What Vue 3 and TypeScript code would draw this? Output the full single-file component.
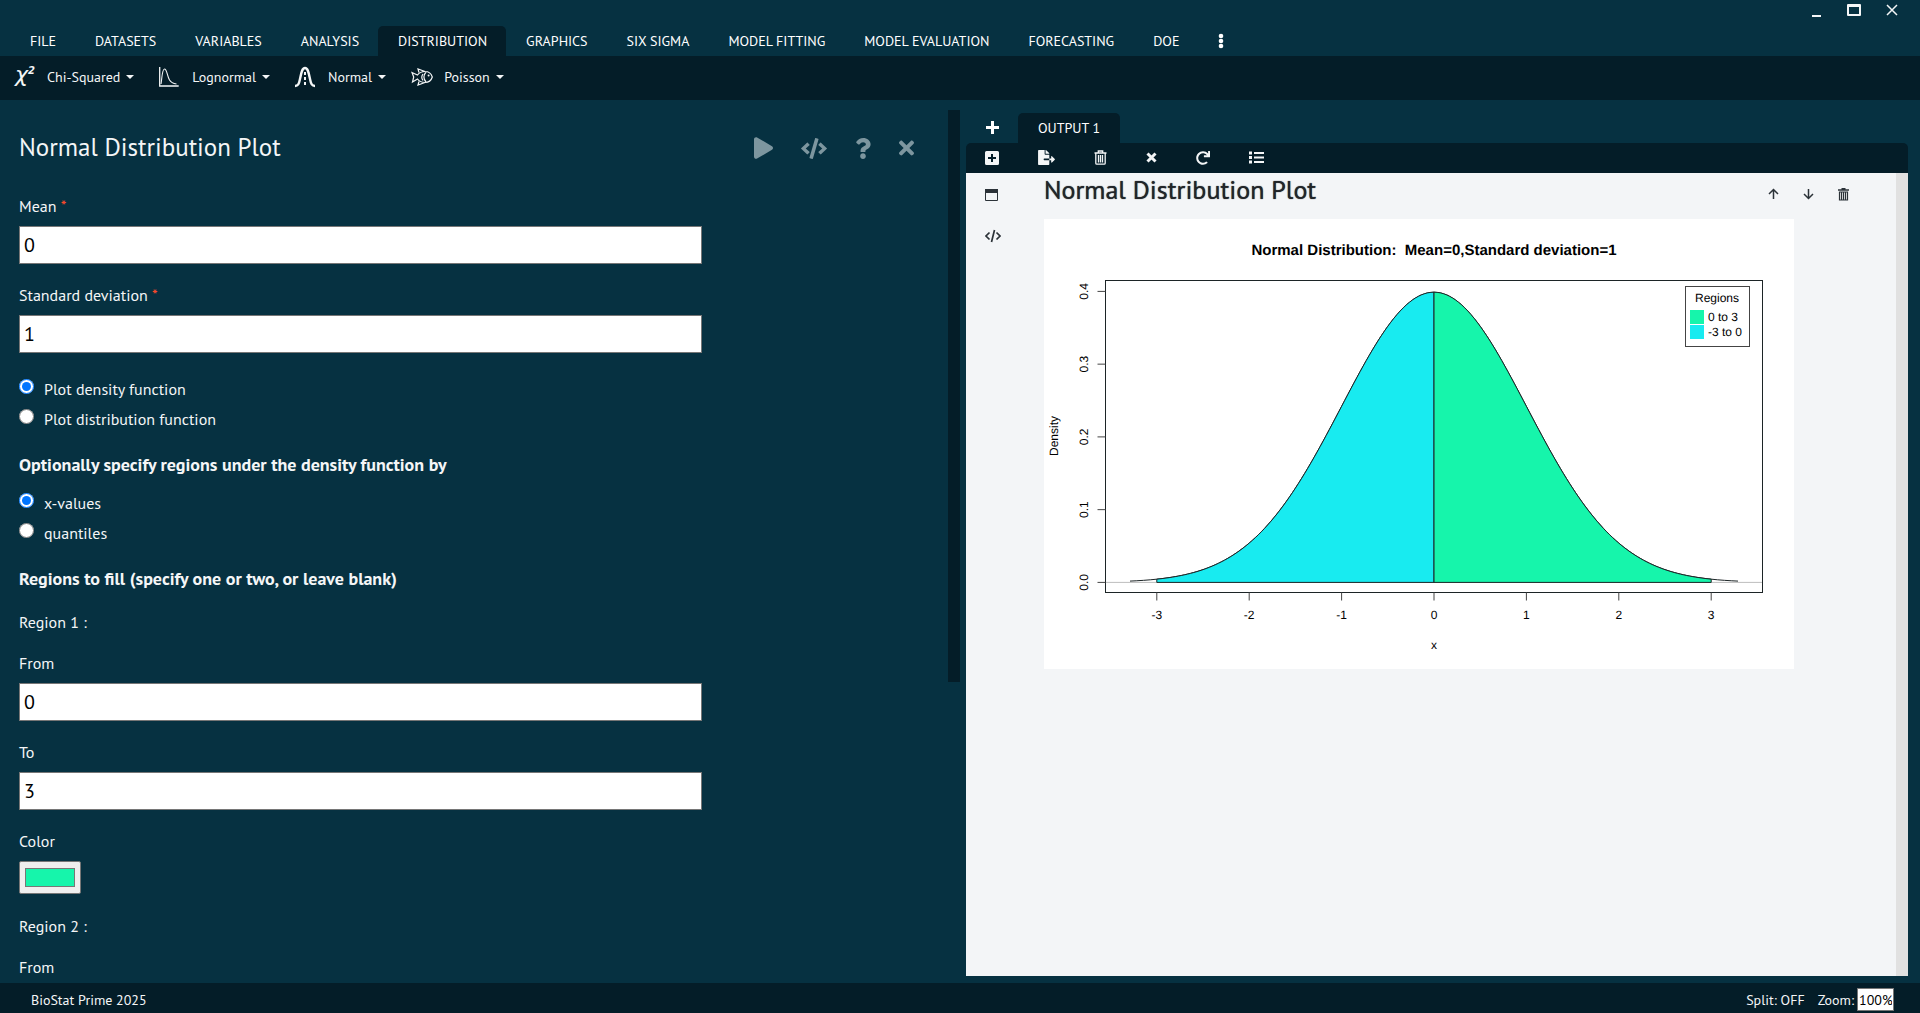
<script setup lang="ts">
import { ref } from 'vue'

const tabs = [
  'FILE', 'DATASETS', 'VARIABLES', 'ANALYSIS', 'DISTRIBUTION', 'GRAPHICS', 'SIX SIGMA',
  'MODEL FITTING', 'MODEL EVALUATION', 'FORECASTING', 'DOE',
]
const activeTab = ref('DISTRIBUTION')

const mean = ref('0')
const sd = ref('1')
const plotKind = ref('density')
const regionKind = ref('x')
const from1 = ref('0')
const to1 = ref('3')
const color1 = ref('#16f5ab')
const color2 = '#18ebf0'
const from2 = ref('-3')
const zoomLevel = ref('100%')

// Chart geometry, in viewBox units.
const x0 = 390
const xUnit = 92.4
const y0 = 363.4
const yUnit = 727.5
const box = { left: 61.5, top: 61.5, right: 718.5, bottom: 373.5 }

const px = (x: number) => x0 + x * xUnit
const py = (y: number) => y0 - y * yUnit
const density = (x: number) => Math.exp((-x * x) / 2) / Math.sqrt(2 * Math.PI)

function curve(a: number, b: number): string {
  const steps = 90
  const pts: string[] = []
  for (let i = 0; i <= steps; i++) {
    const x = a + ((b - a) * i) / steps
    pts.push(`${px(x).toFixed(2)},${py(density(x)).toFixed(2)}`)
  }
  return pts.join(' ')
}
const area = (a: number, b: number) => `${px(a)},${y0} ${curve(a, b)} ${px(b)},${y0}`

const xTicks = [-3, -2, -1, 0, 1, 2, 3]
const yTicks = [0, 0.1, 0.2, 0.3, 0.4]
</script>

<template>
  <div class="app">
    <header class="titlebar">
      <nav class="tabs">
        <button
          v-for="t in tabs"
          :key="t"
          class="tab"
          :class="{ active: t === activeTab }"
          @click="activeTab = t"
        >{{ t }}</button>
        <button class="tab more" aria-label="More">
          <svg width="6" height="16" viewBox="0 0 6 16"><circle cx="3" cy="3" r="2.300" /><circle cx="3" cy="8" r="2.300" /><circle cx="3" cy="13" r="2.300" /></svg>
        </button>
      </nav>
      <div class="window-controls">
        <button aria-label="Minimize"><svg width="16" height="16" viewBox="0 0 16 16"><path d="M4 13h9v2H4z" /></svg></button>
        <button aria-label="Maximize"><svg width="16" height="16" viewBox="0 0 16 16"><path fill-rule="evenodd" d="M2 2h12q1 0 1 1v10q0 1-1 1H2q-1 0-1-1V3q0-1 1-1zm1 3v7h10V5z" /></svg></button>
        <button aria-label="Close"><svg width="16" height="16" viewBox="0 0 16 16"><path class="stroke" d="M3 3l10 10M13 3L3 13" stroke-width="1.500" /></svg></button>
      </div>
    </header>

    <div class="ribbon">
      <button class="tool">
        <span class="glyph chi">χ<sup>2</sup></span>
        <span>Chi-Squared</span><i class="caret"></i>
      </button>
      <button class="tool">
        <svg class="glyph" viewBox="2 0 22 22"><path class="stroke" d="M2.700 1v19h19" stroke-width="1.300" /><path class="stroke" d="M4 18C5 13 5 3 7.500 3c2.500 0 2.500 7 5 11 1.500 2.500 4 3.500 7 4" stroke-width="1.100" /></svg>
        <span>Lognormal</span><i class="caret"></i>
      </button>
      <button class="tool">
        <svg class="glyph" viewBox="1 0 22 22"><path class="stroke" d="M1 20c3 0 4-2 5-7C7.200 7 8 2 11 2s3.800 5 5 11c1 5 2 7 5 7" stroke-width="2.400" /><path class="stroke" d="M11 6v15" stroke-width="2" stroke-dasharray="3 2" /></svg>
        <span>Normal</span><i class="caret"></i>
      </button>
      <button class="tool">
        <svg class="glyph" viewBox="0 0 22 22"><path class="stroke" d="M6.500 9C8.500 6.500 11 5.500 14 5.500c4 0 6.500 3 7.300 5.500-.8 2.500-3.300 5.500-7.300 5.500-3 0-5.500-1-7.500-3.500L1.500 16l1.200-5L1 6.500zM8 6.500L7 3l7 2.500M8 15.500L7 19l7-2.500M15 6c-2.500 3-2.500 7 0 10M12 8c-1.500 2-1.500 4.500 0 6.500" stroke-width="1.200" /><circle cx="17.600" cy="9.600" r="1" /></svg>
        <span>Poisson</span><i class="caret"></i>
      </button>
    </div>

    <main class="workspace">
      <section class="dialog">
        <div class="dialog-scroll">
          <div class="dialog-head">
            <h1>Normal Distribution Plot</h1>
            <div class="dialog-actions">
              <button aria-label="Run"><svg width="19" height="22" viewBox="0 0 448 512"><path d="M424.400 214.700L72.400 6.600C43.800-10.300 0 6.100 0 47.900V464c0 37.500 40.700 60.100 72.400 41.300l352-208c31.400-18.500 31.500-64.100 0-82.600z" /></svg></button>
              <button aria-label="Syntax"><svg width="26" height="21" viewBox="0 0 640 512"><path d="M278.900 511.500l-61-17.700c-6.400-1.800-10-8.500-8.200-14.900L346.200 8.700c1.800-6.400 8.500-10 14.900-8.200l61 17.700c6.400 1.800 10 8.500 8.200 14.900L293.800 503.300c-1.900 6.400-8.500 10.100-14.900 8.200zm-114-112.200l43.500-46.400c4.600-4.900 4.300-12.700-.8-17.200L117 256l90.600-79.700c5.100-4.500 5.500-12.300.8-17.200l-43.500-46.400c-4.500-4.800-12.100-5.100-17-.5L3.800 247.200c-5.100 4.700-5.100 12.800 0 17.500l144.100 135.100c4.900 4.600 12.500 4.400 17-.5zm327.200.6l144.100-135.100c5.100-4.700 5.100-12.800 0-17.500L492.100 112.100c-4.800-4.500-12.400-4.300-17 .5L431.600 159c-4.600 4.900-4.300 12.700.8 17.200L523 256l-90.600 79.700c-5.100 4.500-5.500 12.300-.8 17.200l43.500 46.400c4.500 4.900 12.100 5.100 17 .6z" /></svg></button>
              <button aria-label="Help"><svg width="16" height="21" viewBox="0 0 384 512"><path d="M202 0C122.200 0 70.500 32.700 29.900 91c-7.400 10.600-5.100 25.100 5.200 32.900l43.100 32.700c10.400 7.900 25.100 6 33.300-4.100 25-31.400 43.600-49.500 82.700-49.500 30.800 0 68.800 19.800 68.800 49.600 0 22.600-18.600 34.200-49 51.200-35.400 19.900-82.300 44.600-82.300 106.400V320c0 13.300 10.700 24 24 24h72.500c13.300 0 24-10.700 24-24v-5.800c0-42.900 125.300-44.600 125.300-160.600C377.500 66.300 286.900 0 202 0zM192 373.500c-38.200 0-69.300 31-69.300 69.200S153.800 512 192 512s69.300-31.100 69.300-69.300-31.100-69.200-69.300-69.200z" /></svg></button>
              <button aria-label="Close dialog"><svg width="15" height="22" viewBox="0 0 352 512"><path d="M242.700 256l100.100-100.100c12.300-12.300 12.300-32.200 0-44.500l-22.200-22.200c-12.300-12.300-32.200-12.300-44.500 0L176 189.300 75.900 89.200c-12.300-12.300-32.200-12.300-44.500 0L9.200 111.400c-12.300 12.300-12.300 32.200 0 44.500L109.300 256 9.200 356.100c-12.300 12.300-12.300 32.200 0 44.500l22.200 22.200c12.300 12.300 32.200 12.300 44.500 0L176 322.700l100.100 100.100c12.300 12.300 32.200 12.300 44.500 0l22.200-22.200c12.300-12.300 12.300-32.200 0-44.500z" /></svg></button>
            </div>
          </div>

          <form class="form" @submit.prevent>
            <div class="field">
              <label for="mean">Mean <span class="req">*</span></label>
              <input id="mean" v-model="mean" type="text" />
            </div>
            <div class="field">
              <label for="sd">Standard deviation <span class="req">*</span></label>
              <input id="sd" v-model="sd" type="text" />
            </div>
            <div class="radios">
              <label><input v-model="plotKind" type="radio" name="plot" value="density" /><span>Plot density function</span></label>
              <label><input v-model="plotKind" type="radio" name="plot" value="distribution" /><span>Plot distribution function</span></label>
            </div>
            <h2>Optionally specify regions under the density function by</h2>
            <div class="radios by">
              <label><input v-model="regionKind" type="radio" name="by" value="x" /><span>x-values</span></label>
              <label><input v-model="regionKind" type="radio" name="by" value="q" /><span>quantiles</span></label>
            </div>
            <h2>Regions to fill (specify one or two, or leave blank)</h2>
            <p>Region 1 :</p>
            <div class="field">
              <label for="from1">From</label>
              <input id="from1" v-model="from1" type="text" />
            </div>
            <div class="field">
              <label for="to1">To</label>
              <input id="to1" v-model="to1" type="text" />
            </div>
            <div class="field">
              <label for="color1">Color</label>
              <input id="color1" v-model="color1" type="color" />
            </div>
            <p>Region 2 :</p>
            <div class="field">
              <label for="from2">From</label>
              <input id="from2" v-model="from2" type="text" />
            </div>
          </form>
        </div>
        <div class="dialog-bar"><div class="dialog-thumb"></div></div>
      </section>

      <section class="output">
        <div class="output-tabs">
          <button class="add" aria-label="New output"><svg width="13" height="13" viewBox="0 0 13 13"><path d="M5 0h3v5h5v3H8v5H5V8H0V5h5z" /></svg></button>
          <button class="output-tab">OUTPUT 1</button>
        </div>
        <div class="output-tools">
          <button aria-label="Add"><svg width="14" height="14" viewBox="0 0 14 14"><path fill-rule="evenodd" d="M1.500 0h11Q14 0 14 1.500v11q0 1.500-1.500 1.500h-11Q0 14 0 12.500v-11Q0 0 1.500 0zM6 3v3H3v2h3v3h2V8h3V6H8V3z" /></svg></button>
          <button aria-label="Export"><svg width="17" height="15" viewBox="0 0 576 512"><path d="M384 121.900c0-6.300-2.500-12.400-7-16.900L279.100 7c-4.500-4.500-10.600-7-17-7H256v128h128zM571 308l-95.700-96.400c-10.100-10.100-27.400-3-27.400 11.300V288h-64v64h64v65.200c0 14.300 17.300 21.400 27.400 11.300L571 332c6.600-6.600 6.600-17.400 0-24zm-379 28v-32c0-8.800 7.200-16 16-16h176V160H248c-13.200 0-24-10.800-24-24V0H24C10.700 0 0 10.700 0 24v464c0 13.300 10.700 24 24 24h336c13.300 0 24-10.700 24-24V352H208c-8.800 0-16-7.200-16-16z" /></svg></button>
          <button aria-label="Delete"><svg width="13" height="15" viewBox="0 0 13 15"><path class="stroke" d="M.5 3h12M4.300 3V1h4.400v2M1.800 3v10.200q0 1 1 1h7.400q1 0 1-1V3M4.500 5v7.500M6.500 5v7.500M8.500 5v7.500" stroke-width="1.300" /></svg></button>
          <button aria-label="Close"><svg width="11" height="11" viewBox="0 0 11 11"><path class="stroke" d="M1.500 1.500l8 8M9.500 1.500l-8 8" stroke-width="3" /></svg></button>
          <button aria-label="Rerun"><svg width="14" height="14" viewBox="0 0 512 512"><path d="M500.300 0h-47.400a12 12 0 0 0-12 12.600l4 82.700A247.400 247.400 0 0 0 256 8C119.300 8 7.900 119.500 8 256.200 8.100 393.100 119.100 504 256 504a247.100 247.100 0 0 0 166.200-63.900 12 12 0 0 0 .5-17.400l-34-34a12 12 0 0 0-16.400-.6A176 176 0 1 1 402.100 157.800l-101.500-4.900a12 12 0 0 0-12.600 12v47.400a12 12 0 0 0 12 12h200.300a12 12 0 0 0 12-12V12a12 12 0 0 0-12-12z" /></svg></button>
          <button aria-label="List"><svg width="15" height="13" viewBox="0 0 15 13"><path d="M0 .5h3v3H0zM0 5h3v3H0zM0 9.500h3v3H0zM5 1h10v2H5zM5 5.500h10v2H5zM5 10h10v2H5z" /></svg></button>
        </div>
        <div class="output-body">
          <aside class="side">
            <button aria-label="Collapse"><svg width="13" height="12" viewBox="0 0 13 12"><path class="stroke" d="M.5 1.500h12v10H.5z" stroke-width="1" /><path d="M0 0h13v4H0z" /></svg></button>
            <button aria-label="Show code"><svg width="16" height="14" viewBox="0 0 16 14"><path class="stroke" d="M4.500 3.500L1 7l3.500 3.500M11.500 3.500L15 7l-3.500 3.500M9.500 1l-3 12" stroke-width="1.700" /></svg></button>
          </aside>
          <article class="result">
            <div class="result-head">
              <h2>Normal Distribution Plot</h2>
              <div class="result-actions">
                <button aria-label="Move up"><svg width="11" height="12" viewBox="0 0 11 12"><path class="stroke" d="M5.500 11V1.500M1 6l4.500-4.500L10 6" stroke-width="1.500" /></svg></button>
                <button aria-label="Move down"><svg width="11" height="12" viewBox="0 0 11 12"><path class="stroke" d="M5.500 1v9.500M1 6l4.500 4.500L10 6" stroke-width="1.500" /></svg></button>
                <button aria-label="Remove"><svg width="11" height="13" viewBox="0 0 11 13"><path d="M0 1.200h3.500V0h4v1.200H11v1.600H0z" /><path class="stroke" d="M1.500 4h8v8h-8zM3.500 4v8M5.500 4v8M7.500 4v8" stroke-width="1.200" /></svg></button>
              </div>
            </div>
            <svg class="chart" viewBox="0 0 750 450" role="img" aria-label="Normal distribution density">
              <rect width="750" height="450" fill="#fff" />
              <text x="390" y="36" class="chart-title">Normal Distribution:&nbsp; Mean=0,Standard deviation=1</text>
              <path :d="`M${box.left} ${y0}H${box.right}`" stroke="#bebebe" />
              <polyline :points="curve(-3.290, 3.290)" class="line" />
              <polygon :points="area(-3, 0)" class="line" :style="{ fill: color2 }" />
              <polygon :points="area(0, 3)" class="line" :style="{ fill: color1 }" />
              <rect :x="box.left" :y="box.top" :width="box.right - box.left" :height="box.bottom - box.top" class="line" />
              <g v-for="t in xTicks" :key="'x' + t">
                <path :d="`M${px(t)} ${box.bottom}v8`" class="line thin" />
                <text :x="px(t)" y="400" class="mid">{{ t }}</text>
              </g>
              <g v-for="t in yTicks" :key="'y' + t">
                <path :d="`M${box.left} ${py(t)}h-8`" class="line thin" />
                <text :transform="`translate(44 ${py(t)}) rotate(-90)`" class="mid">{{ t.toFixed(1) }}</text>
              </g>
              <text transform="translate(14 217) rotate(-90)" class="mid">Density</text>
              <text x="390" y="430" class="mid">x</text>
              <rect x="641.500" y="67.500" width="64" height="60" class="line thin" />
              <text x="673" y="83" class="mid">Regions</text>
              <rect x="646" y="91" width="14" height="14" :fill="color1" />
              <rect x="646" y="106" width="14" height="14" :fill="color2" />
              <text x="664" y="102">0 to 3</text>
              <text x="664" y="117">-3 to 0</text>
            </svg>
          </article>
          <div class="output-bar"></div>
        </div>
      </section>
    </main>

    <footer class="status">
      <span>BioStat Prime 2025</span>
      <div class="status-right">
        <span>Split: OFF</span>
        <label for="zoom">Zoom:</label>
        <input id="zoom" v-model="zoomLevel" type="text" />
      </div>
    </footer>
  </div>
</template>

<style>
body {
  margin: 0;
  background: #063141;
}
</style>

<style scoped>
.app {
  display: flex;
  flex-direction: column;
  height: 100vh;
  overflow: hidden;
  background: #063141;
  color: #f4f6f7;
  font-family: "PT Sans", Lato, "Open Sans", sans-serif;
  font-size: 16px;
  line-height: 24px;
}
button {
  display: inline-flex;
  align-items: center;
  padding: 0;
  border: 0;
  background: none;
  color: inherit;
  font: inherit;
}
svg {
  display: block;
  fill: currentColor;
}
.stroke {
  fill: none;
  stroke: currentColor;
}
h1, h2, p {
  margin: 0;
}
.titlebar {
  display: flex;
  justify-content: space-between;
  height: 56px;
}
.tabs {
  display: flex;
  align-items: flex-end;
  padding-left: 10px;
}
.tab {
  height: 30px;
  padding: 0 19px 0 20px;
  border-radius: 5px 5px 0 0;
  font-size: 14px;
  color: #fff;
}
.tab.active {
  background: #041d28;
}
.window-controls {
  display: flex;
  align-items: flex-start;
  gap: 22px;
  padding: 2px 20px 0 0;
}
.ribbon {
  display: flex;
  align-items: center;
  gap: 25px;
  box-sizing: border-box;
  height: 44px;
  padding: 0 14px 2px;
  background: #041d28;
  font-size: 14px;
}
.tool span:not(.glyph) {
  margin-left: 11px;
}
.glyph {
  width: 22px;
  height: 22px;
}
.chi {
  font: italic 22px/18px "DejaVu Sans", sans-serif;
}
.chi sup {
  font-size: 10px;
  font-weight: 700;
  line-height: 0;
}
.caret {
  margin-left: 6px;
  border: 4px solid transparent;
  border-top-color: currentColor;
  border-bottom: 0;
}
.workspace {
  display: flex;
  flex: 1;
  min-height: 0;
}
.dialog {
  display: flex;
  flex: 0 0 50%;
  box-sizing: border-box;
  padding-top: 10px;
}
.dialog-scroll {
  flex: 1;
  overflow: hidden;
  padding: 21px 19px 0;
}
.dialog-bar {
  width: 12px;
}
.dialog-thumb {
  height: 65.5%;
  background: #041d28;
}
.dialog-head {
  display: flex;
  justify-content: space-between;
  align-items: center;
  height: 32px;
  padding-right: 15px;
}
.dialog-head h1 {
  font-size: 25px;
  font-weight: 400;
  line-height: 32px;
}
.dialog-actions {
  display: flex;
  align-items: center;
  gap: 28px;
  padding-top: 2px;
  color: #7d969f;
}
.form {
  width: 75%;
  padding-top: 31px;
}
.field {
  display: flex;
  flex-direction: column;
  margin-bottom: 19px;
}
.field input {
  box-sizing: border-box;
  margin-top: 8px;
}
.field input[type="text"] {
  height: 38px;
  padding: 0 4px;
  border: 1px solid #767676;
  background: #fff;
  color: #000;
  font: 20px/24px "PT Sans", Lato, sans-serif;
}
.field input[type="color"] {
  width: 62px;
  height: 33px;
  padding: 2px 3px;
  border: 1px solid #767676;
  border-radius: 2px;
  background: #efefef;
}
.req {
  color: #ff4a2a;
}
.radios {
  padding-top: 3px;
  margin-bottom: 18px;
}
.radios.by {
  padding-top: 12px;
}
.radios label {
  display: flex;
  align-items: flex-start;
  height: 30px;
  line-height: 28px;
}
.radios input {
  width: 15px;
  height: 15px;
  margin: 4px 10px 0 0;
}
.form h2 {
  font-size: 18px;
  line-height: 24px;
}
.form p {
  padding-top: 1px;
  margin: 18px 0 17px;
}
.output {
  display: flex;
  flex: 1;
  flex-direction: column;
  min-width: 0;
  padding: 13px 12px 7px 6px;
}
.output-tabs {
  display: flex;
  height: 30px;
  font-size: 14px;
  color: #fff;
}
.add {
  padding: 0 19px 2px 20px;
}
.output-tab {
  padding: 0 20px;
  border-radius: 5px 5px 0 0;
  background: #041d28;
}
.output-tools {
  display: flex;
  align-items: center;
  gap: 39px;
  box-sizing: border-box;
  height: 30px;
  padding: 0 19px 1px;
  border-radius: 5px 5px 0 0;
  background: #041d28;
}
.output-body {
  display: flex;
  flex: 1;
  min-height: 0;
  background: #f3f5f7;
  color: #2b3238;
}
.side {
  display: flex;
  flex-direction: column;
  gap: 28px;
  width: 59px;
  padding: 16px 0 0 19px;
}
.result {
  flex: 1;
}
.result-head {
  display: flex;
  justify-content: space-between;
  height: 46px;
}
.result-head h2 {
  color: #212529;
  font-size: 26px;
  font-weight: 500;
  line-height: 34px;
  text-shadow: 0 0 1px currentColor;
}
.result-actions {
  display: flex;
  align-items: flex-start;
  gap: 24px;
  padding: 15px 47px 0 0;
}
.output-bar {
  width: 12px;
  background: #e1e1e1;
}
.chart {
  width: 100%;
  max-width: 750px;
  fill: #000;
  font-family: "Liberation Sans", Arial, sans-serif;
  font-size: 12px;
  text-rendering: geometricPrecision;
}
.chart-title {
  font-size: 15px;
  font-weight: 700;
  text-anchor: middle;
}
.mid {
  text-anchor: middle;
}
.line {
  fill: none;
  stroke: #1c2426;
  stroke-width: 1;
}
.line.thin {
  stroke: #444;
}
.status {
  display: flex;
  align-items: center;
  justify-content: space-between;
  box-sizing: border-box;
  height: 30px;
  padding: 3px 26px 0 31px;
  background: #041d28;
  font-size: 14px;
}
.status-right {
  display: flex;
  align-items: center;
}
.status-right label {
  margin: 0 3px 0 13px;
}
.status-right input {
  box-sizing: border-box;
  width: 37px;
  height: 23px;
  padding: 0 1px;
  border: 1px solid #767676;
  background: #fff;
  color: #000;
  font: inherit;
}
</style>
